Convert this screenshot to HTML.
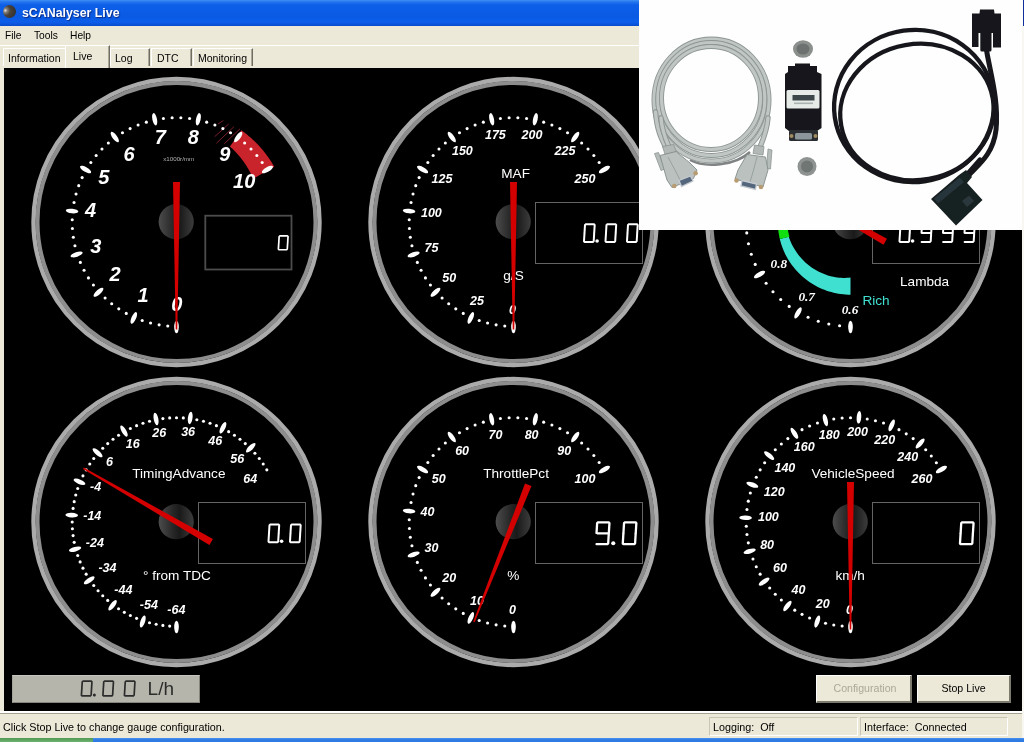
<!DOCTYPE html>
<html><head><meta charset="utf-8"><title>sCANalyser Live</title>
<style>
html,body{margin:0;padding:0;}
body{width:1024px;height:742px;overflow:hidden;background:#ece9d8;font-family:"Liberation Sans",sans-serif;position:relative;}
.abs{position:absolute;}
#title{left:0;top:0;width:1024px;height:26px;background:linear-gradient(#3f90f4 0,#2474ee 2px,#0d5ee8 5px,#0a5ae4 17px,#0c5eea 22px,#0a4ccc 26px);}
#title span{position:absolute;left:21.5px;top:5px;color:#fff;font-weight:bold;font-size:13.5px;text-shadow:1px 1px 1px #0a2a80;white-space:nowrap;transform:scaleX(0.915);transform-origin:0 0;}
#icon{left:3.4px;top:5px;width:13px;height:13px;border-radius:50%;background:radial-gradient(circle at 18% 42%,#e8e8e8 0,#8a8580 14%,#4a433c 38%,#3a3631 70%,#1c2030 100%);}
#menu{left:0;top:26px;width:1024px;height:19px;background:#ece9d8;font-size:11px;}
#menu span{position:absolute;top:3px;color:#000;transform:scaleX(0.93);transform-origin:0 0;}
.tab{position:absolute;top:48px;height:18px;background:#ece9d8;border-top:1px solid #fff;border-left:1px solid #fff;border-right:1px solid #6f6d62;box-shadow:inset -1px 0 0 #aca899;font-size:10.5px;line-height:19px;color:#000;box-sizing:border-box;padding-left:4px;white-space:nowrap;}
#panel{left:4px;top:68px;width:1018px;height:643px;background:#000;}
#status{left:0;top:712px;width:1024px;height:26px;background:#ece9d8;font-size:10.75px;color:#000;}
.sp{position:absolute;top:5px;height:19px;border:1px solid #c9c6b6;border-bottom-color:#fff;border-right-color:#fff;box-sizing:border-box;line-height:18px;padding-left:3px;white-space:pre;}
.btn{position:absolute;top:675px;height:27.5px;background:#ece9d8;border:1px solid #fff;border-right:2px solid #7d7b6e;border-bottom:2px solid #7d7b6e;box-sizing:border-box;font-size:10.6px;text-align:center;line-height:24px;}
#lcd{left:12px;top:675px;width:188px;height:28px;background:#b5b5ab;border:1px solid #85857c;border-top-color:#c6c6be;border-left-color:#a5a59c;box-sizing:border-box;}
</style></head><body><div style="position:absolute;left:0;top:0;width:1024px;height:742px;will-change:transform;overflow:hidden">
<div id="title" class="abs"><div id="icon" class="abs"></div><span>sCANalyser Live</span></div>
<div id="menu" class="abs"><span style="left:5px">File</span><span style="left:34px">Tools</span><span style="left:70px">Help</span></div>
<div class="abs" style="left:0;top:45px;width:1024px;height:1px;background:#fff"></div>
<div class="tab" style="left:3px;width:63px;border-right:none;box-shadow:none">Information</div>
<div class="tab" style="left:110px;width:40px;">Log</div>
<div class="tab" style="left:151px;width:41px;padding-left:5px">DTC</div>
<div class="tab" style="left:193px;width:60px;">Monitoring</div>
<div class="tab" style="left:65px;width:45px;top:45px;height:23px;line-height:21px;padding-left:7px;">Live</div>
<div id="panel" class="abs"></div>
<svg class="abs" style="left:0;top:0;will-change:transform" width="1024" height="742" viewBox="0 0 1024 742">
<defs><linearGradient id="hub" x1="0" y1="0" x2="1" y2="0"><stop offset="0" stop-color="#4c4c4c"/><stop offset="0.42" stop-color="#262626"/><stop offset="0.6" stop-color="#1a1a1a"/><stop offset="1" stop-color="#3c3c3c"/></linearGradient></defs>
<circle cx="176.5" cy="222" r="143" fill="#000" stroke="#ababab" stroke-width="4.4"/>
<circle cx="176.5" cy="222" r="139" fill="none" stroke="#8d8d8d" stroke-width="4"/>
<polygon points="241.39,130.35 242.40,131.07 243.40,131.80 244.39,132.55 245.38,133.30 246.35,134.07 247.32,134.84 248.28,135.63 249.22,136.43 250.16,137.24 251.10,138.05 252.02,138.88 252.93,139.72 253.83,140.57 254.73,141.43 255.61,142.30 256.49,143.18 257.35,144.06 258.21,144.96 259.05,145.87 259.89,146.78 260.71,147.71 261.53,148.64 262.33,149.59 263.13,150.54 263.91,151.50 264.69,152.47 265.45,153.45 266.20,154.43 266.94,155.43 267.67,156.43 268.39,157.44 269.09,158.46 269.79,159.48 270.47,160.52 271.15,161.56 271.81,162.61 272.46,163.66 273.10,164.73 273.72,165.79 274.34,166.87 253.17,178.80 252.78,177.90 252.39,177.00 251.98,176.11 251.57,175.22 251.14,174.33 250.70,173.45 250.26,172.57 249.80,171.70 249.33,170.83 248.85,169.96 248.37,169.10 247.87,168.24 247.36,167.39 246.84,166.54 246.31,165.69 245.77,164.86 245.22,164.02 244.66,163.19 244.09,162.37 243.52,161.55 242.93,160.74 242.33,159.93 241.72,159.13 241.10,158.34 240.48,157.55 239.84,156.77 239.19,155.99 238.54,155.22 237.87,154.45 237.20,153.70 236.51,152.95 235.82,152.20 235.12,151.46 234.41,150.73 233.69,150.01 232.96,149.30 232.22,148.59 231.47,147.89 230.72,147.19 229.95,146.51" fill="#c9242b"/><line x1="224.3" y1="143.7" x2="240" y2="128.8" stroke="#7c1f2c" stroke-width="1"/><line x1="216.4" y1="143.3" x2="233.9" y2="126.7" stroke="#7c1f2c" stroke-width="1"/><line x1="214.6" y1="136.7" x2="228.7" y2="124" stroke="#7c1f2c" stroke-width="1"/><line x1="218" y1="124" x2="223.4" y2="120.5" stroke="#7c1f2c" stroke-width="1"/><text x="178.7" y="161" font-family="Liberation Sans" font-size="6.2" text-anchor="middle" fill="#b0b0b0">x1000r/mm</text>
<circle cx="167.77" cy="325.93" r="1.55" fill="#fff"/>
<circle cx="159.11" cy="324.84" r="1.55" fill="#fff"/>
<circle cx="150.56" cy="323.02" r="1.55" fill="#fff"/>
<circle cx="142.20" cy="320.50" r="1.55" fill="#fff"/>
<circle cx="126.25" cy="313.40" r="1.55" fill="#fff"/>
<circle cx="118.78" cy="308.87" r="1.55" fill="#fff"/>
<circle cx="111.71" cy="303.74" r="1.55" fill="#fff"/>
<circle cx="105.10" cy="298.03" r="1.55" fill="#fff"/>
<circle cx="93.42" cy="285.06" r="1.55" fill="#fff"/>
<circle cx="88.44" cy="277.89" r="1.55" fill="#fff"/>
<circle cx="84.07" cy="270.32" r="1.55" fill="#fff"/>
<circle cx="80.35" cy="262.42" r="1.55" fill="#fff"/>
<circle cx="74.96" cy="245.82" r="1.55" fill="#fff"/>
<circle cx="73.32" cy="237.24" r="1.55" fill="#fff"/>
<circle cx="72.41" cy="228.55" r="1.55" fill="#fff"/>
<circle cx="72.22" cy="219.82" r="1.55" fill="#fff"/>
<circle cx="74.05" cy="202.46" r="1.55" fill="#fff"/>
<circle cx="76.04" cy="193.95" r="1.55" fill="#fff"/>
<circle cx="78.74" cy="185.64" r="1.55" fill="#fff"/>
<circle cx="82.13" cy="177.59" r="1.55" fill="#fff"/>
<circle cx="90.85" cy="162.47" r="1.55" fill="#fff"/>
<circle cx="96.14" cy="155.52" r="1.55" fill="#fff"/>
<circle cx="101.98" cy="149.03" r="1.55" fill="#fff"/>
<circle cx="108.35" cy="143.05" r="1.55" fill="#fff"/>
<circle cx="122.47" cy="132.79" r="1.55" fill="#fff"/>
<circle cx="130.12" cy="128.58" r="1.55" fill="#fff"/>
<circle cx="138.10" cy="125.02" r="1.55" fill="#fff"/>
<circle cx="146.35" cy="122.15" r="1.55" fill="#fff"/>
<circle cx="163.43" cy="118.52" r="1.55" fill="#fff"/>
<circle cx="172.13" cy="117.79" r="1.55" fill="#fff"/>
<circle cx="180.87" cy="117.79" r="1.55" fill="#fff"/>
<circle cx="189.57" cy="118.52" r="1.55" fill="#fff"/>
<circle cx="206.65" cy="122.15" r="1.55" fill="#fff"/>
<circle cx="214.90" cy="125.02" r="1.55" fill="#fff"/>
<circle cx="222.88" cy="128.58" r="1.55" fill="#fff"/>
<circle cx="230.53" cy="132.79" r="1.55" fill="#fff"/>
<circle cx="244.65" cy="143.05" r="1.55" fill="#fff"/>
<circle cx="251.02" cy="149.03" r="1.55" fill="#fff"/>
<circle cx="256.86" cy="155.52" r="1.55" fill="#fff"/>
<circle cx="262.15" cy="162.47" r="1.55" fill="#fff"/>
<ellipse cx="176.50" cy="327.00" rx="6.3" ry="2.3" fill="#fff" transform="rotate(90.00 176.50 327.00)"/>
<ellipse cx="133.79" cy="317.92" rx="6.3" ry="2.3" fill="#fff" transform="rotate(114.00 133.79 317.92)"/>
<ellipse cx="98.47" cy="292.26" rx="6.3" ry="2.3" fill="#fff" transform="rotate(138.00 98.47 292.26)"/>
<ellipse cx="76.64" cy="254.45" rx="6.3" ry="2.3" fill="#fff" transform="rotate(162.00 76.64 254.45)"/>
<ellipse cx="72.08" cy="211.02" rx="6.3" ry="2.3" fill="#fff" transform="rotate(186.00 72.08 211.02)"/>
<ellipse cx="85.57" cy="169.50" rx="6.3" ry="2.3" fill="#fff" transform="rotate(210.00 85.57 169.50)"/>
<ellipse cx="114.78" cy="137.05" rx="6.3" ry="2.3" fill="#fff" transform="rotate(234.00 114.78 137.05)"/>
<ellipse cx="154.67" cy="119.29" rx="6.3" ry="2.3" fill="#fff" transform="rotate(258.00 154.67 119.29)"/>
<ellipse cx="198.33" cy="119.29" rx="6.3" ry="2.3" fill="#fff" transform="rotate(282.00 198.33 119.29)"/>
<ellipse cx="238.22" cy="137.05" rx="6.3" ry="2.3" fill="#fff" transform="rotate(306.00 238.22 137.05)"/>
<ellipse cx="267.43" cy="169.50" rx="6.3" ry="2.3" fill="#fff" transform="rotate(330.00 267.43 169.50)"/>
<text x="176.70" y="303.50" font-family="Liberation Sans" font-weight="bold" font-style="italic" font-size="20" text-anchor="middle" dominant-baseline="central" fill="#fff">0</text>
<text x="143.00" y="295.30" font-family="Liberation Sans" font-weight="bold" font-style="italic" font-size="20" text-anchor="middle" dominant-baseline="central" fill="#fff">1</text>
<text x="115.00" y="274.20" font-family="Liberation Sans" font-weight="bold" font-style="italic" font-size="20" text-anchor="middle" dominant-baseline="central" fill="#fff">2</text>
<text x="95.90" y="245.50" font-family="Liberation Sans" font-weight="bold" font-style="italic" font-size="20" text-anchor="middle" dominant-baseline="central" fill="#fff">3</text>
<text x="90.50" y="210.20" font-family="Liberation Sans" font-weight="bold" font-style="italic" font-size="20" text-anchor="middle" dominant-baseline="central" fill="#fff">4</text>
<text x="103.80" y="176.50" font-family="Liberation Sans" font-weight="bold" font-style="italic" font-size="20" text-anchor="middle" dominant-baseline="central" fill="#fff">5</text>
<text x="129.10" y="153.60" font-family="Liberation Sans" font-weight="bold" font-style="italic" font-size="20" text-anchor="middle" dominant-baseline="central" fill="#fff">6</text>
<text x="160.20" y="137.40" font-family="Liberation Sans" font-weight="bold" font-style="italic" font-size="20" text-anchor="middle" dominant-baseline="central" fill="#fff">7</text>
<text x="193.30" y="137.40" font-family="Liberation Sans" font-weight="bold" font-style="italic" font-size="20" text-anchor="middle" dominant-baseline="central" fill="#fff">8</text>
<text x="224.70" y="153.60" font-family="Liberation Sans" font-weight="bold" font-style="italic" font-size="20" text-anchor="middle" dominant-baseline="central" fill="#fff">9</text>
<text x="244.20" y="180.50" font-family="Liberation Sans" font-weight="bold" font-style="italic" font-size="20" text-anchor="middle" dominant-baseline="central" fill="#fff">10</text>
<circle cx="176.2" cy="221.7" r="17.6" fill="url(#hub)"/>
<rect x="205.3" y="215.7" width="86.2" height="53.8" fill="#000" stroke="#4c4c4c" stroke-width="1.8"/>
<g stroke="#fff" stroke-width="1.70" stroke-linecap="round" fill="none"><line x1="279.90" y1="235.85" x2="287.40" y2="235.85"/><line x1="288.05" y1="236.55" x2="287.69" y2="242.45"/><line x1="287.64" y1="243.15" x2="287.28" y2="249.05"/><line x1="279.04" y1="249.75" x2="286.54" y2="249.75"/><line x1="278.74" y1="243.15" x2="278.38" y2="249.05"/><line x1="279.15" y1="236.55" x2="278.79" y2="242.45"/></g>
<polygon points="173.00,182.00 175.70,329.50 177.30,329.50 180.00,182.00" fill="#d40000"/>
<circle cx="513.5" cy="222" r="143" fill="#000" stroke="#ababab" stroke-width="4.4"/>
<circle cx="513.5" cy="222" r="139" fill="none" stroke="#8d8d8d" stroke-width="4"/>

<circle cx="504.77" cy="325.93" r="1.55" fill="#fff"/>
<circle cx="496.11" cy="324.84" r="1.55" fill="#fff"/>
<circle cx="487.56" cy="323.02" r="1.55" fill="#fff"/>
<circle cx="479.20" cy="320.50" r="1.55" fill="#fff"/>
<circle cx="463.25" cy="313.40" r="1.55" fill="#fff"/>
<circle cx="455.78" cy="308.87" r="1.55" fill="#fff"/>
<circle cx="448.71" cy="303.74" r="1.55" fill="#fff"/>
<circle cx="442.10" cy="298.03" r="1.55" fill="#fff"/>
<circle cx="430.42" cy="285.06" r="1.55" fill="#fff"/>
<circle cx="425.44" cy="277.89" r="1.55" fill="#fff"/>
<circle cx="421.07" cy="270.32" r="1.55" fill="#fff"/>
<circle cx="417.35" cy="262.42" r="1.55" fill="#fff"/>
<circle cx="411.96" cy="245.82" r="1.55" fill="#fff"/>
<circle cx="410.32" cy="237.24" r="1.55" fill="#fff"/>
<circle cx="409.41" cy="228.55" r="1.55" fill="#fff"/>
<circle cx="409.22" cy="219.82" r="1.55" fill="#fff"/>
<circle cx="411.05" cy="202.46" r="1.55" fill="#fff"/>
<circle cx="413.04" cy="193.95" r="1.55" fill="#fff"/>
<circle cx="415.74" cy="185.64" r="1.55" fill="#fff"/>
<circle cx="419.13" cy="177.59" r="1.55" fill="#fff"/>
<circle cx="427.85" cy="162.47" r="1.55" fill="#fff"/>
<circle cx="433.14" cy="155.52" r="1.55" fill="#fff"/>
<circle cx="438.98" cy="149.03" r="1.55" fill="#fff"/>
<circle cx="445.35" cy="143.05" r="1.55" fill="#fff"/>
<circle cx="459.47" cy="132.79" r="1.55" fill="#fff"/>
<circle cx="467.12" cy="128.58" r="1.55" fill="#fff"/>
<circle cx="475.10" cy="125.02" r="1.55" fill="#fff"/>
<circle cx="483.35" cy="122.15" r="1.55" fill="#fff"/>
<circle cx="500.43" cy="118.52" r="1.55" fill="#fff"/>
<circle cx="509.13" cy="117.79" r="1.55" fill="#fff"/>
<circle cx="517.87" cy="117.79" r="1.55" fill="#fff"/>
<circle cx="526.57" cy="118.52" r="1.55" fill="#fff"/>
<circle cx="543.65" cy="122.15" r="1.55" fill="#fff"/>
<circle cx="551.90" cy="125.02" r="1.55" fill="#fff"/>
<circle cx="559.88" cy="128.58" r="1.55" fill="#fff"/>
<circle cx="567.53" cy="132.79" r="1.55" fill="#fff"/>
<circle cx="581.65" cy="143.05" r="1.55" fill="#fff"/>
<circle cx="588.02" cy="149.03" r="1.55" fill="#fff"/>
<circle cx="593.86" cy="155.52" r="1.55" fill="#fff"/>
<circle cx="599.15" cy="162.47" r="1.55" fill="#fff"/>
<ellipse cx="513.50" cy="327.00" rx="6.3" ry="2.3" fill="#fff" transform="rotate(90.00 513.50 327.00)"/>
<ellipse cx="470.79" cy="317.92" rx="6.3" ry="2.3" fill="#fff" transform="rotate(114.00 470.79 317.92)"/>
<ellipse cx="435.47" cy="292.26" rx="6.3" ry="2.3" fill="#fff" transform="rotate(138.00 435.47 292.26)"/>
<ellipse cx="413.64" cy="254.45" rx="6.3" ry="2.3" fill="#fff" transform="rotate(162.00 413.64 254.45)"/>
<ellipse cx="409.08" cy="211.02" rx="6.3" ry="2.3" fill="#fff" transform="rotate(186.00 409.08 211.02)"/>
<ellipse cx="422.57" cy="169.50" rx="6.3" ry="2.3" fill="#fff" transform="rotate(210.00 422.57 169.50)"/>
<ellipse cx="451.78" cy="137.05" rx="6.3" ry="2.3" fill="#fff" transform="rotate(234.00 451.78 137.05)"/>
<ellipse cx="491.67" cy="119.29" rx="6.3" ry="2.3" fill="#fff" transform="rotate(258.00 491.67 119.29)"/>
<ellipse cx="535.33" cy="119.29" rx="6.3" ry="2.3" fill="#fff" transform="rotate(282.00 535.33 119.29)"/>
<ellipse cx="575.22" cy="137.05" rx="6.3" ry="2.3" fill="#fff" transform="rotate(306.00 575.22 137.05)"/>
<ellipse cx="604.43" cy="169.50" rx="6.3" ry="2.3" fill="#fff" transform="rotate(330.00 604.43 169.50)"/>
<text x="512.50" y="309.60" font-family="Liberation Sans" font-weight="bold" font-style="italic" font-size="12.5" text-anchor="middle" dominant-baseline="central" fill="#fff">0</text>
<text x="477.00" y="301.20" font-family="Liberation Sans" font-weight="bold" font-style="italic" font-size="12.5" text-anchor="middle" dominant-baseline="central" fill="#fff">25</text>
<text x="449.20" y="278.20" font-family="Liberation Sans" font-weight="bold" font-style="italic" font-size="12.5" text-anchor="middle" dominant-baseline="central" fill="#fff">50</text>
<text x="431.40" y="247.80" font-family="Liberation Sans" font-weight="bold" font-style="italic" font-size="12.5" text-anchor="middle" dominant-baseline="central" fill="#fff">75</text>
<text x="431.40" y="212.50" font-family="Liberation Sans" font-weight="bold" font-style="italic" font-size="12.5" text-anchor="middle" dominant-baseline="central" fill="#fff">100</text>
<text x="442.00" y="179.20" font-family="Liberation Sans" font-weight="bold" font-style="italic" font-size="12.5" text-anchor="middle" dominant-baseline="central" fill="#fff">125</text>
<text x="462.40" y="150.50" font-family="Liberation Sans" font-weight="bold" font-style="italic" font-size="12.5" text-anchor="middle" dominant-baseline="central" fill="#fff">150</text>
<text x="495.40" y="134.60" font-family="Liberation Sans" font-weight="bold" font-style="italic" font-size="12.5" text-anchor="middle" dominant-baseline="central" fill="#fff">175</text>
<text x="532.00" y="134.60" font-family="Liberation Sans" font-weight="bold" font-style="italic" font-size="12.5" text-anchor="middle" dominant-baseline="central" fill="#fff">200</text>
<text x="565.00" y="150.50" font-family="Liberation Sans" font-weight="bold" font-style="italic" font-size="12.5" text-anchor="middle" dominant-baseline="central" fill="#fff">225</text>
<text x="585.00" y="179.20" font-family="Liberation Sans" font-weight="bold" font-style="italic" font-size="12.5" text-anchor="middle" dominant-baseline="central" fill="#fff">250</text>
<text x="515.6" y="177.6" font-family="Liberation Sans" font-size="13.6" text-anchor="middle" fill="#fff">MAF</text>
<text x="513.5" y="279.5" font-family="Liberation Sans" font-size="13.6" text-anchor="middle" fill="#fff">g/S</text>
<circle cx="513.2" cy="221.7" r="17.6" fill="url(#hub)"/>
<rect x="535.5" y="202.5" width="107" height="61" fill="#000" stroke="#646464" stroke-width="1"/>
<g stroke="#fff" stroke-width="2.00" stroke-linecap="round" fill="none"><line x1="628.74" y1="224.30" x2="637.04" y2="224.30"/><line x1="637.69" y1="225.00" x2="637.21" y2="232.75"/><line x1="637.17" y1="233.45" x2="636.69" y2="241.20"/><line x1="627.65" y1="241.90" x2="635.95" y2="241.90"/><line x1="627.47" y1="233.45" x2="626.99" y2="241.20"/><line x1="627.99" y1="225.00" x2="627.51" y2="232.75"/></g><g stroke="#fff" stroke-width="2.00" stroke-linecap="round" fill="none"><line x1="607.24" y1="224.30" x2="615.54" y2="224.30"/><line x1="616.19" y1="225.00" x2="615.71" y2="232.75"/><line x1="615.67" y1="233.45" x2="615.19" y2="241.20"/><line x1="606.15" y1="241.90" x2="614.45" y2="241.90"/><line x1="605.97" y1="233.45" x2="605.49" y2="241.20"/><line x1="606.49" y1="225.00" x2="606.01" y2="232.75"/></g><circle cx="597.10" cy="241.00" r="1.80" fill="#fff"/><g stroke="#fff" stroke-width="2.00" stroke-linecap="round" fill="none"><line x1="585.74" y1="224.30" x2="594.04" y2="224.30"/><line x1="594.69" y1="225.00" x2="594.21" y2="232.75"/><line x1="594.17" y1="233.45" x2="593.69" y2="241.20"/><line x1="584.65" y1="241.90" x2="592.95" y2="241.90"/><line x1="584.47" y1="233.45" x2="583.99" y2="241.20"/><line x1="584.99" y1="225.00" x2="584.51" y2="232.75"/></g>
<polygon points="510.00,182.00 512.70,329.50 514.30,329.50 517.00,182.00" fill="#d40000"/>
<circle cx="850.5" cy="222" r="143" fill="#000" stroke="#ababab" stroke-width="4.4"/>
<circle cx="850.5" cy="222" r="139" fill="none" stroke="#8d8d8d" stroke-width="4"/>
<polygon points="850.50,294.70 848.07,294.66 845.65,294.54 843.23,294.34 840.82,294.05 838.42,293.69 836.04,293.25 833.67,292.72 831.32,292.12 828.99,291.44 826.68,290.69 824.40,289.85 822.15,288.95 819.93,287.96 817.75,286.91 815.60,285.78 813.49,284.58 811.42,283.31 809.40,281.97 807.42,280.56 805.49,279.09 803.61,277.56 801.78,275.96 800.01,274.31 798.29,272.59 796.63,270.82 795.03,269.00 793.50,267.12 792.02,265.19 790.61,263.22 789.27,261.20 788.00,259.13 786.79,257.02 785.66,254.88 784.60,252.70 783.61,250.48 782.70,248.23 781.86,245.95 781.10,243.65 780.41,241.32 779.81,238.97 788.75,236.82 789.47,238.82 790.26,240.79 791.11,242.73 792.01,244.63 792.98,246.49 794.01,248.31 795.10,250.09 796.24,251.83 797.43,253.52 798.68,255.17 799.98,256.77 801.33,258.32 802.72,259.82 804.16,261.26 805.64,262.65 807.17,263.99 808.73,265.27 810.33,266.50 811.97,267.66 813.63,268.77 815.33,269.81 817.06,270.80 818.81,271.72 820.59,272.58 822.39,273.37 824.21,274.11 826.04,274.78 827.90,275.38 829.76,275.92 831.64,276.40 833.52,276.81 835.41,277.15 837.31,277.43 839.20,277.65 841.10,277.80 842.99,277.89 844.88,277.91 846.76,277.87 848.64,277.77 850.50,277.60" fill="#40e0d0"/><polygon points="779.81,238.97 779.57,237.94 779.34,236.90 779.13,235.86 778.94,234.81 778.76,233.76 778.59,232.71 778.44,231.66 778.31,230.61 778.19,229.55 778.09,228.49 778.00,227.44 777.93,226.37 777.88,225.31 777.83,224.25 777.81,223.19 777.80,222.13 777.81,221.06 777.83,220.00 777.86,218.94 777.92,217.88 777.98,216.82 778.07,215.76 778.17,214.70 778.28,213.64 778.41,212.59 778.56,211.54 778.72,210.49 778.89,209.44 779.08,208.39 779.29,207.35 779.51,206.31 779.75,205.28 780.00,204.24 780.27,203.21 780.55,202.19 780.85,201.17 781.16,200.15 781.49,199.14 781.83,198.14 782.18,197.14 789.89,199.94 789.61,200.84 789.35,201.75 789.10,202.66 788.87,203.57 788.65,204.48 788.44,205.40 788.24,206.32 788.06,207.24 787.89,208.16 787.74,209.09 787.60,210.02 787.47,210.94 787.36,211.87 787.26,212.80 787.17,213.73 787.10,214.66 787.04,215.60 787.00,216.53 786.97,217.46 786.95,218.39 786.95,219.32 786.96,220.25 786.98,221.18 787.02,222.11 787.07,223.04 787.14,223.96 787.21,224.89 787.30,225.81 787.41,226.73 787.53,227.65 787.66,228.56 787.80,229.48 787.96,230.39 788.13,231.29 788.32,232.20 788.52,233.10 788.73,233.99 788.95,234.89 789.19,235.78 789.44,236.66" fill="#10e010"/>
<circle cx="839.60" cy="325.73" r="1.55" fill="#fff"/>
<circle cx="828.81" cy="324.02" r="1.55" fill="#fff"/>
<circle cx="818.27" cy="321.20" r="1.55" fill="#fff"/>
<circle cx="808.08" cy="317.28" r="1.55" fill="#fff"/>
<circle cx="789.19" cy="306.38" r="1.55" fill="#fff"/>
<circle cx="780.71" cy="299.51" r="1.55" fill="#fff"/>
<circle cx="772.99" cy="291.79" r="1.55" fill="#fff"/>
<circle cx="766.12" cy="283.31" r="1.55" fill="#fff"/>
<circle cx="755.22" cy="264.42" r="1.55" fill="#fff"/>
<circle cx="751.30" cy="254.23" r="1.55" fill="#fff"/>
<circle cx="748.48" cy="243.69" r="1.55" fill="#fff"/>
<circle cx="746.77" cy="232.90" r="1.55" fill="#fff"/>
<circle cx="746.77" cy="211.10" r="1.55" fill="#fff"/>
<circle cx="748.48" cy="200.31" r="1.55" fill="#fff"/>
<circle cx="751.30" cy="189.77" r="1.55" fill="#fff"/>
<circle cx="755.22" cy="179.58" r="1.55" fill="#fff"/>
<circle cx="766.12" cy="160.69" r="1.55" fill="#fff"/>
<circle cx="772.99" cy="152.21" r="1.55" fill="#fff"/>
<circle cx="780.71" cy="144.49" r="1.55" fill="#fff"/>
<circle cx="789.19" cy="137.62" r="1.55" fill="#fff"/>
<circle cx="808.08" cy="126.72" r="1.55" fill="#fff"/>
<circle cx="818.27" cy="122.80" r="1.55" fill="#fff"/>
<circle cx="828.81" cy="119.98" r="1.55" fill="#fff"/>
<circle cx="839.60" cy="118.27" r="1.55" fill="#fff"/>
<circle cx="861.40" cy="118.27" r="1.55" fill="#fff"/>
<circle cx="872.19" cy="119.98" r="1.55" fill="#fff"/>
<circle cx="882.73" cy="122.80" r="1.55" fill="#fff"/>
<circle cx="892.92" cy="126.72" r="1.55" fill="#fff"/>
<circle cx="911.81" cy="137.62" r="1.55" fill="#fff"/>
<circle cx="920.29" cy="144.49" r="1.55" fill="#fff"/>
<circle cx="928.01" cy="152.21" r="1.55" fill="#fff"/>
<circle cx="934.88" cy="160.69" r="1.55" fill="#fff"/>
<ellipse cx="850.50" cy="327.00" rx="6.3" ry="2.3" fill="#fff" transform="rotate(90.00 850.50 327.00)"/>
<ellipse cx="798.00" cy="312.93" rx="6.3" ry="2.3" fill="#fff" transform="rotate(120.00 798.00 312.93)"/>
<ellipse cx="759.57" cy="274.50" rx="6.3" ry="2.3" fill="#fff" transform="rotate(150.00 759.57 274.50)"/>
<ellipse cx="745.50" cy="222.00" rx="6.3" ry="2.3" fill="#fff" transform="rotate(180.00 745.50 222.00)"/>
<ellipse cx="759.57" cy="169.50" rx="6.3" ry="2.3" fill="#fff" transform="rotate(210.00 759.57 169.50)"/>
<ellipse cx="798.00" cy="131.07" rx="6.3" ry="2.3" fill="#fff" transform="rotate(240.00 798.00 131.07)"/>
<ellipse cx="850.50" cy="117.00" rx="6.3" ry="2.3" fill="#fff" transform="rotate(270.00 850.50 117.00)"/>
<ellipse cx="903.00" cy="131.07" rx="6.3" ry="2.3" fill="#fff" transform="rotate(300.00 903.00 131.07)"/>
<ellipse cx="941.43" cy="169.50" rx="6.3" ry="2.3" fill="#fff" transform="rotate(330.00 941.43 169.50)"/>
<text x="850.00" y="309.60" font-family="Liberation Serif" font-weight="bold" font-style="italic" font-size="13.3" text-anchor="middle" dominant-baseline="central" fill="#fff">0.6</text>
<text x="806.70" y="296.70" font-family="Liberation Serif" font-weight="bold" font-style="italic" font-size="13.3" text-anchor="middle" dominant-baseline="central" fill="#fff">0.7</text>
<text x="778.80" y="263.00" font-family="Liberation Serif" font-weight="bold" font-style="italic" font-size="13.3" text-anchor="middle" dominant-baseline="central" fill="#fff">0.8</text>
<text x="767.50" y="222.00" font-family="Liberation Serif" font-weight="bold" font-style="italic" font-size="13.3" text-anchor="middle" dominant-baseline="central" fill="#fff">0.9</text>
<text x="778.62" y="180.50" font-family="Liberation Serif" font-weight="bold" font-style="italic" font-size="13.3" text-anchor="middle" dominant-baseline="central" fill="#fff">1.0</text>
<text x="809.00" y="150.12" font-family="Liberation Serif" font-weight="bold" font-style="italic" font-size="13.3" text-anchor="middle" dominant-baseline="central" fill="#fff">1.1</text>
<text x="850.50" y="139.00" font-family="Liberation Serif" font-weight="bold" font-style="italic" font-size="13.3" text-anchor="middle" dominant-baseline="central" fill="#fff">1.2</text>
<text x="892.00" y="150.12" font-family="Liberation Serif" font-weight="bold" font-style="italic" font-size="13.3" text-anchor="middle" dominant-baseline="central" fill="#fff">1.3</text>
<text x="922.38" y="180.50" font-family="Liberation Serif" font-weight="bold" font-style="italic" font-size="13.3" text-anchor="middle" dominant-baseline="central" fill="#fff">1.4</text>
<text x="924.6" y="285.9" font-family="Liberation Sans" font-size="13.6" text-anchor="middle" fill="#fff">Lambda</text>
<text x="876" y="305.1" font-family="Liberation Sans" font-size="13.6" text-anchor="middle" fill="#40e0d0">Rich</text>
<circle cx="850.2" cy="221.7" r="17.6" fill="url(#hub)"/>
<rect x="872.5" y="202.5" width="107" height="61" fill="#000" stroke="#646464" stroke-width="1"/>
<g stroke="#fff" stroke-width="2.00" stroke-linecap="round" fill="none"><line x1="965.74" y1="224.30" x2="974.04" y2="224.30"/><line x1="974.69" y1="225.00" x2="974.21" y2="232.75"/><line x1="974.17" y1="233.45" x2="973.69" y2="241.20"/><line x1="964.65" y1="241.90" x2="972.95" y2="241.90"/><line x1="964.99" y1="225.00" x2="964.51" y2="232.75"/><line x1="965.19" y1="233.10" x2="973.49" y2="233.10"/></g><g stroke="#fff" stroke-width="2.00" stroke-linecap="round" fill="none"><line x1="944.24" y1="224.30" x2="952.54" y2="224.30"/><line x1="953.19" y1="225.00" x2="952.71" y2="232.75"/><line x1="952.67" y1="233.45" x2="952.19" y2="241.20"/><line x1="943.15" y1="241.90" x2="951.45" y2="241.90"/><line x1="943.49" y1="225.00" x2="943.01" y2="232.75"/><line x1="943.69" y1="233.10" x2="951.99" y2="233.10"/></g><g stroke="#fff" stroke-width="2.00" stroke-linecap="round" fill="none"><line x1="922.74" y1="224.30" x2="931.04" y2="224.30"/><line x1="931.69" y1="225.00" x2="931.21" y2="232.75"/><line x1="931.17" y1="233.45" x2="930.69" y2="241.20"/><line x1="921.65" y1="241.90" x2="929.95" y2="241.90"/><line x1="921.99" y1="225.00" x2="921.51" y2="232.75"/><line x1="922.19" y1="233.10" x2="930.49" y2="233.10"/></g><circle cx="912.60" cy="241.00" r="1.80" fill="#fff"/><g stroke="#fff" stroke-width="2.00" stroke-linecap="round" fill="none"><line x1="901.24" y1="224.30" x2="909.54" y2="224.30"/><line x1="910.19" y1="225.00" x2="909.71" y2="232.75"/><line x1="909.67" y1="233.45" x2="909.19" y2="241.20"/><line x1="900.15" y1="241.90" x2="908.45" y2="241.90"/><line x1="899.97" y1="233.45" x2="899.49" y2="241.20"/><line x1="900.49" y1="225.00" x2="900.01" y2="232.75"/></g>
<polygon points="886.98,238.78 757.52,168.04 756.73,169.43 883.51,244.86" fill="#d40000"/>
<circle cx="176.5" cy="522" r="143" fill="#000" stroke="#ababab" stroke-width="4.4"/>
<circle cx="176.5" cy="522" r="139" fill="none" stroke="#8d8d8d" stroke-width="4"/>

<circle cx="169.68" cy="626.08" r="1.55" fill="#fff"/>
<circle cx="162.89" cy="625.41" r="1.55" fill="#fff"/>
<circle cx="156.15" cy="624.30" r="1.55" fill="#fff"/>
<circle cx="149.51" cy="622.75" r="1.55" fill="#fff"/>
<circle cx="136.59" cy="618.36" r="1.55" fill="#fff"/>
<circle cx="130.37" cy="615.54" r="1.55" fill="#fff"/>
<circle cx="124.35" cy="612.33" r="1.55" fill="#fff"/>
<circle cx="118.55" cy="608.72" r="1.55" fill="#fff"/>
<circle cx="107.73" cy="600.42" r="1.55" fill="#fff"/>
<circle cx="102.75" cy="595.75" r="1.55" fill="#fff"/>
<circle cx="98.08" cy="590.77" r="1.55" fill="#fff"/>
<circle cx="93.75" cy="585.49" r="1.55" fill="#fff"/>
<circle cx="86.17" cy="574.15" r="1.55" fill="#fff"/>
<circle cx="82.96" cy="568.13" r="1.55" fill="#fff"/>
<circle cx="80.14" cy="561.91" r="1.55" fill="#fff"/>
<circle cx="77.74" cy="555.53" r="1.55" fill="#fff"/>
<circle cx="74.20" cy="542.35" r="1.55" fill="#fff"/>
<circle cx="73.09" cy="535.61" r="1.55" fill="#fff"/>
<circle cx="72.42" cy="528.82" r="1.55" fill="#fff"/>
<circle cx="72.20" cy="522.00" r="1.55" fill="#fff"/>
<circle cx="73.09" cy="508.39" r="1.55" fill="#fff"/>
<circle cx="74.20" cy="501.65" r="1.55" fill="#fff"/>
<circle cx="75.75" cy="495.01" r="1.55" fill="#fff"/>
<circle cx="77.74" cy="488.47" r="1.55" fill="#fff"/>
<circle cx="82.96" cy="475.87" r="1.55" fill="#fff"/>
<circle cx="86.17" cy="469.85" r="1.55" fill="#fff"/>
<circle cx="89.78" cy="464.05" r="1.55" fill="#fff"/>
<circle cx="93.75" cy="458.51" r="1.55" fill="#fff"/>
<circle cx="102.75" cy="448.25" r="1.55" fill="#fff"/>
<circle cx="107.73" cy="443.58" r="1.55" fill="#fff"/>
<circle cx="113.01" cy="439.25" r="1.55" fill="#fff"/>
<circle cx="118.55" cy="435.28" r="1.55" fill="#fff"/>
<circle cx="130.37" cy="428.46" r="1.55" fill="#fff"/>
<circle cx="136.59" cy="425.64" r="1.55" fill="#fff"/>
<circle cx="142.97" cy="423.24" r="1.55" fill="#fff"/>
<circle cx="149.51" cy="421.25" r="1.55" fill="#fff"/>
<circle cx="162.89" cy="418.59" r="1.55" fill="#fff"/>
<circle cx="169.68" cy="417.92" r="1.55" fill="#fff"/>
<circle cx="176.50" cy="417.70" r="1.55" fill="#fff"/>
<circle cx="183.32" cy="417.92" r="1.55" fill="#fff"/>
<circle cx="196.85" cy="419.70" r="1.55" fill="#fff"/>
<circle cx="203.49" cy="421.25" r="1.55" fill="#fff"/>
<circle cx="210.03" cy="423.24" r="1.55" fill="#fff"/>
<circle cx="216.41" cy="425.64" r="1.55" fill="#fff"/>
<circle cx="228.65" cy="431.67" r="1.55" fill="#fff"/>
<circle cx="234.45" cy="435.28" r="1.55" fill="#fff"/>
<circle cx="239.99" cy="439.25" r="1.55" fill="#fff"/>
<circle cx="245.27" cy="443.58" r="1.55" fill="#fff"/>
<circle cx="254.92" cy="453.23" r="1.55" fill="#fff"/>
<circle cx="259.25" cy="458.51" r="1.55" fill="#fff"/>
<circle cx="263.22" cy="464.05" r="1.55" fill="#fff"/>
<circle cx="266.83" cy="469.85" r="1.55" fill="#fff"/>
<ellipse cx="176.50" cy="627.00" rx="6.3" ry="2.3" fill="#fff" transform="rotate(90.00 176.50 627.00)"/>
<ellipse cx="142.75" cy="621.43" rx="6.3" ry="2.3" fill="#fff" transform="rotate(108.75 142.75 621.43)"/>
<ellipse cx="112.58" cy="605.30" rx="6.3" ry="2.3" fill="#fff" transform="rotate(127.50 112.58 605.30)"/>
<ellipse cx="89.20" cy="580.33" rx="6.3" ry="2.3" fill="#fff" transform="rotate(146.25 89.20 580.33)"/>
<ellipse cx="75.08" cy="549.18" rx="6.3" ry="2.3" fill="#fff" transform="rotate(165.00 75.08 549.18)"/>
<ellipse cx="71.72" cy="515.13" rx="6.3" ry="2.3" fill="#fff" transform="rotate(183.75 71.72 515.13)"/>
<ellipse cx="79.49" cy="481.82" rx="6.3" ry="2.3" fill="#fff" transform="rotate(202.50 79.49 481.82)"/>
<ellipse cx="97.56" cy="452.77" rx="6.3" ry="2.3" fill="#fff" transform="rotate(221.25 97.56 452.77)"/>
<ellipse cx="124.00" cy="431.07" rx="6.3" ry="2.3" fill="#fff" transform="rotate(240.00 124.00 431.07)"/>
<ellipse cx="156.02" cy="419.02" rx="6.3" ry="2.3" fill="#fff" transform="rotate(258.75 156.02 419.02)"/>
<ellipse cx="190.21" cy="417.90" rx="6.3" ry="2.3" fill="#fff" transform="rotate(277.50 190.21 417.90)"/>
<ellipse cx="222.94" cy="427.83" rx="6.3" ry="2.3" fill="#fff" transform="rotate(296.25 222.94 427.83)"/>
<ellipse cx="250.75" cy="447.75" rx="6.3" ry="2.3" fill="#fff" transform="rotate(315.00 250.75 447.75)"/>
<text x="176.40" y="610.20" font-family="Liberation Sans" font-weight="bold" font-style="italic" font-size="12.5" text-anchor="middle" dominant-baseline="central" fill="#fff">-64</text>
<text x="148.90" y="604.70" font-family="Liberation Sans" font-weight="bold" font-style="italic" font-size="12.5" text-anchor="middle" dominant-baseline="central" fill="#fff">-54</text>
<text x="123.40" y="590.20" font-family="Liberation Sans" font-weight="bold" font-style="italic" font-size="12.5" text-anchor="middle" dominant-baseline="central" fill="#fff">-44</text>
<text x="107.50" y="567.50" font-family="Liberation Sans" font-weight="bold" font-style="italic" font-size="12.5" text-anchor="middle" dominant-baseline="central" fill="#fff">-34</text>
<text x="94.90" y="542.60" font-family="Liberation Sans" font-weight="bold" font-style="italic" font-size="12.5" text-anchor="middle" dominant-baseline="central" fill="#fff">-24</text>
<text x="92.30" y="515.50" font-family="Liberation Sans" font-weight="bold" font-style="italic" font-size="12.5" text-anchor="middle" dominant-baseline="central" fill="#fff">-14</text>
<text x="95.60" y="487.30" font-family="Liberation Sans" font-weight="bold" font-style="italic" font-size="12.5" text-anchor="middle" dominant-baseline="central" fill="#fff">-4</text>
<text x="109.50" y="462.10" font-family="Liberation Sans" font-weight="bold" font-style="italic" font-size="12.5" text-anchor="middle" dominant-baseline="central" fill="#fff">6</text>
<text x="132.80" y="444.30" font-family="Liberation Sans" font-weight="bold" font-style="italic" font-size="12.5" text-anchor="middle" dominant-baseline="central" fill="#fff">16</text>
<text x="159.30" y="433.30" font-family="Liberation Sans" font-weight="bold" font-style="italic" font-size="12.5" text-anchor="middle" dominant-baseline="central" fill="#fff">26</text>
<text x="188.10" y="432.30" font-family="Liberation Sans" font-weight="bold" font-style="italic" font-size="12.5" text-anchor="middle" dominant-baseline="central" fill="#fff">36</text>
<text x="215.20" y="441.10" font-family="Liberation Sans" font-weight="bold" font-style="italic" font-size="12.5" text-anchor="middle" dominant-baseline="central" fill="#fff">46</text>
<text x="237.20" y="458.90" font-family="Liberation Sans" font-weight="bold" font-style="italic" font-size="12.5" text-anchor="middle" dominant-baseline="central" fill="#fff">56</text>
<text x="250.20" y="478.60" font-family="Liberation Sans" font-weight="bold" font-style="italic" font-size="12.5" text-anchor="middle" dominant-baseline="central" fill="#fff">64</text>
<text x="178.9" y="478.3" font-family="Liberation Sans" font-size="13.6" text-anchor="middle" fill="#fff">TimingAdvance</text>
<text x="176.9" y="580.1" font-family="Liberation Sans" font-size="13.6" text-anchor="middle" fill="#fff">° from TDC</text>
<circle cx="176.2" cy="521.7" r="17.6" fill="url(#hub)"/>
<rect x="198.5" y="502.5" width="107" height="61" fill="#000" stroke="#646464" stroke-width="1"/>
<g stroke="#fff" stroke-width="2.00" stroke-linecap="round" fill="none"><line x1="291.74" y1="524.60" x2="300.04" y2="524.60"/><line x1="300.69" y1="525.30" x2="300.21" y2="533.05"/><line x1="300.17" y1="533.75" x2="299.69" y2="541.50"/><line x1="290.65" y1="542.20" x2="298.95" y2="542.20"/><line x1="290.47" y1="533.75" x2="289.99" y2="541.50"/><line x1="290.99" y1="525.30" x2="290.51" y2="533.05"/></g><circle cx="281.60" cy="541.30" r="1.80" fill="#fff"/><g stroke="#fff" stroke-width="2.00" stroke-linecap="round" fill="none"><line x1="270.24" y1="524.60" x2="278.54" y2="524.60"/><line x1="279.19" y1="525.30" x2="278.71" y2="533.05"/><line x1="278.67" y1="533.75" x2="278.19" y2="541.50"/><line x1="269.15" y1="542.20" x2="277.45" y2="542.20"/><line x1="268.97" y1="533.75" x2="268.49" y2="541.50"/><line x1="269.49" y1="525.30" x2="269.01" y2="533.05"/></g>
<polygon points="212.89,538.97 83.80,467.56 83.00,468.94 209.39,545.03" fill="#d40000"/>
<circle cx="513.5" cy="522" r="143" fill="#000" stroke="#ababab" stroke-width="4.4"/>
<circle cx="513.5" cy="522" r="139" fill="none" stroke="#8d8d8d" stroke-width="4"/>

<circle cx="504.77" cy="625.93" r="1.55" fill="#fff"/>
<circle cx="496.11" cy="624.84" r="1.55" fill="#fff"/>
<circle cx="487.56" cy="623.02" r="1.55" fill="#fff"/>
<circle cx="479.20" cy="620.50" r="1.55" fill="#fff"/>
<circle cx="463.25" cy="613.40" r="1.55" fill="#fff"/>
<circle cx="455.78" cy="608.87" r="1.55" fill="#fff"/>
<circle cx="448.71" cy="603.74" r="1.55" fill="#fff"/>
<circle cx="442.10" cy="598.03" r="1.55" fill="#fff"/>
<circle cx="430.42" cy="585.06" r="1.55" fill="#fff"/>
<circle cx="425.44" cy="577.89" r="1.55" fill="#fff"/>
<circle cx="421.07" cy="570.32" r="1.55" fill="#fff"/>
<circle cx="417.35" cy="562.42" r="1.55" fill="#fff"/>
<circle cx="411.96" cy="545.82" r="1.55" fill="#fff"/>
<circle cx="410.32" cy="537.24" r="1.55" fill="#fff"/>
<circle cx="409.41" cy="528.55" r="1.55" fill="#fff"/>
<circle cx="409.22" cy="519.82" r="1.55" fill="#fff"/>
<circle cx="411.05" cy="502.46" r="1.55" fill="#fff"/>
<circle cx="413.04" cy="493.95" r="1.55" fill="#fff"/>
<circle cx="415.74" cy="485.64" r="1.55" fill="#fff"/>
<circle cx="419.13" cy="477.59" r="1.55" fill="#fff"/>
<circle cx="427.85" cy="462.47" r="1.55" fill="#fff"/>
<circle cx="433.14" cy="455.52" r="1.55" fill="#fff"/>
<circle cx="438.98" cy="449.03" r="1.55" fill="#fff"/>
<circle cx="445.35" cy="443.05" r="1.55" fill="#fff"/>
<circle cx="459.47" cy="432.79" r="1.55" fill="#fff"/>
<circle cx="467.12" cy="428.58" r="1.55" fill="#fff"/>
<circle cx="475.10" cy="425.02" r="1.55" fill="#fff"/>
<circle cx="483.35" cy="422.15" r="1.55" fill="#fff"/>
<circle cx="500.43" cy="418.52" r="1.55" fill="#fff"/>
<circle cx="509.13" cy="417.79" r="1.55" fill="#fff"/>
<circle cx="517.87" cy="417.79" r="1.55" fill="#fff"/>
<circle cx="526.57" cy="418.52" r="1.55" fill="#fff"/>
<circle cx="543.65" cy="422.15" r="1.55" fill="#fff"/>
<circle cx="551.90" cy="425.02" r="1.55" fill="#fff"/>
<circle cx="559.88" cy="428.58" r="1.55" fill="#fff"/>
<circle cx="567.53" cy="432.79" r="1.55" fill="#fff"/>
<circle cx="581.65" cy="443.05" r="1.55" fill="#fff"/>
<circle cx="588.02" cy="449.03" r="1.55" fill="#fff"/>
<circle cx="593.86" cy="455.52" r="1.55" fill="#fff"/>
<circle cx="599.15" cy="462.47" r="1.55" fill="#fff"/>
<ellipse cx="513.50" cy="627.00" rx="6.3" ry="2.3" fill="#fff" transform="rotate(90.00 513.50 627.00)"/>
<ellipse cx="470.79" cy="617.92" rx="6.3" ry="2.3" fill="#fff" transform="rotate(114.00 470.79 617.92)"/>
<ellipse cx="435.47" cy="592.26" rx="6.3" ry="2.3" fill="#fff" transform="rotate(138.00 435.47 592.26)"/>
<ellipse cx="413.64" cy="554.45" rx="6.3" ry="2.3" fill="#fff" transform="rotate(162.00 413.64 554.45)"/>
<ellipse cx="409.08" cy="511.02" rx="6.3" ry="2.3" fill="#fff" transform="rotate(186.00 409.08 511.02)"/>
<ellipse cx="422.57" cy="469.50" rx="6.3" ry="2.3" fill="#fff" transform="rotate(210.00 422.57 469.50)"/>
<ellipse cx="451.78" cy="437.05" rx="6.3" ry="2.3" fill="#fff" transform="rotate(234.00 451.78 437.05)"/>
<ellipse cx="491.67" cy="419.29" rx="6.3" ry="2.3" fill="#fff" transform="rotate(258.00 491.67 419.29)"/>
<ellipse cx="535.33" cy="419.29" rx="6.3" ry="2.3" fill="#fff" transform="rotate(282.00 535.33 419.29)"/>
<ellipse cx="575.22" cy="437.05" rx="6.3" ry="2.3" fill="#fff" transform="rotate(306.00 575.22 437.05)"/>
<ellipse cx="604.43" cy="469.50" rx="6.3" ry="2.3" fill="#fff" transform="rotate(330.00 604.43 469.50)"/>
<text x="512.50" y="609.60" font-family="Liberation Sans" font-weight="bold" font-style="italic" font-size="12.5" text-anchor="middle" dominant-baseline="central" fill="#fff">0</text>
<text x="477.00" y="601.20" font-family="Liberation Sans" font-weight="bold" font-style="italic" font-size="12.5" text-anchor="middle" dominant-baseline="central" fill="#fff">10</text>
<text x="449.20" y="578.20" font-family="Liberation Sans" font-weight="bold" font-style="italic" font-size="12.5" text-anchor="middle" dominant-baseline="central" fill="#fff">20</text>
<text x="431.40" y="547.80" font-family="Liberation Sans" font-weight="bold" font-style="italic" font-size="12.5" text-anchor="middle" dominant-baseline="central" fill="#fff">30</text>
<text x="427.50" y="512.20" font-family="Liberation Sans" font-weight="bold" font-style="italic" font-size="12.5" text-anchor="middle" dominant-baseline="central" fill="#fff">40</text>
<text x="438.80" y="479.20" font-family="Liberation Sans" font-weight="bold" font-style="italic" font-size="12.5" text-anchor="middle" dominant-baseline="central" fill="#fff">50</text>
<text x="462.10" y="450.80" font-family="Liberation Sans" font-weight="bold" font-style="italic" font-size="12.5" text-anchor="middle" dominant-baseline="central" fill="#fff">60</text>
<text x="495.40" y="434.60" font-family="Liberation Sans" font-weight="bold" font-style="italic" font-size="12.5" text-anchor="middle" dominant-baseline="central" fill="#fff">70</text>
<text x="531.60" y="434.60" font-family="Liberation Sans" font-weight="bold" font-style="italic" font-size="12.5" text-anchor="middle" dominant-baseline="central" fill="#fff">80</text>
<text x="564.30" y="450.80" font-family="Liberation Sans" font-weight="bold" font-style="italic" font-size="12.5" text-anchor="middle" dominant-baseline="central" fill="#fff">90</text>
<text x="585.00" y="479.20" font-family="Liberation Sans" font-weight="bold" font-style="italic" font-size="12.5" text-anchor="middle" dominant-baseline="central" fill="#fff">100</text>
<text x="516.1" y="478.3" font-family="Liberation Sans" font-size="13.6" text-anchor="middle" fill="#fff">ThrottlePct</text>
<text x="513.2" y="580.1" font-family="Liberation Sans" font-size="13.6" text-anchor="middle" fill="#fff">%</text>
<circle cx="513.2" cy="521.7" r="17.6" fill="url(#hub)"/>
<rect x="535.5" y="502.5" width="107" height="61" fill="#000" stroke="#646464" stroke-width="1"/>
<g stroke="#fff" stroke-width="2.30" stroke-linecap="round" fill="none"><line x1="624.78" y1="522.45" x2="635.68" y2="522.45"/><line x1="636.34" y1="523.15" x2="635.73" y2="532.95"/><line x1="635.68" y1="533.65" x2="635.08" y2="543.45"/><line x1="623.43" y1="544.15" x2="634.33" y2="544.15"/><line x1="623.38" y1="533.65" x2="622.78" y2="543.45"/><line x1="624.04" y1="523.15" x2="623.43" y2="532.95"/></g><circle cx="613.25" cy="543.25" r="2.07" fill="#fff"/><g stroke="#fff" stroke-width="2.30" stroke-linecap="round" fill="none"><line x1="597.88" y1="522.45" x2="608.78" y2="522.45"/><line x1="609.44" y1="523.15" x2="608.83" y2="532.95"/><line x1="608.78" y1="533.65" x2="608.18" y2="543.45"/><line x1="596.53" y1="544.15" x2="607.43" y2="544.15"/><line x1="597.14" y1="523.15" x2="596.53" y2="532.95"/><line x1="597.21" y1="533.30" x2="608.11" y2="533.30"/></g>
<polygon points="524.97,483.52 473.18,621.66 474.67,622.25 531.48,486.10" fill="#d40000"/>
<circle cx="850.5" cy="522" r="143" fill="#000" stroke="#ababab" stroke-width="4.4"/>
<circle cx="850.5" cy="522" r="139" fill="none" stroke="#8d8d8d" stroke-width="4"/>

<circle cx="842.11" cy="625.96" r="1.55" fill="#fff"/>
<circle cx="833.77" cy="624.95" r="1.55" fill="#fff"/>
<circle cx="825.54" cy="623.27" r="1.55" fill="#fff"/>
<circle cx="809.62" cy="617.95" r="1.55" fill="#fff"/>
<circle cx="802.03" cy="614.35" r="1.55" fill="#fff"/>
<circle cx="794.76" cy="610.15" r="1.55" fill="#fff"/>
<circle cx="781.34" cy="600.07" r="1.55" fill="#fff"/>
<circle cx="775.28" cy="594.25" r="1.55" fill="#fff"/>
<circle cx="769.71" cy="587.96" r="1.55" fill="#fff"/>
<circle cx="760.17" cy="574.15" r="1.55" fill="#fff"/>
<circle cx="756.27" cy="566.71" r="1.55" fill="#fff"/>
<circle cx="752.98" cy="558.99" r="1.55" fill="#fff"/>
<circle cx="748.31" cy="542.86" r="1.55" fill="#fff"/>
<circle cx="746.96" cy="534.57" r="1.55" fill="#fff"/>
<circle cx="746.28" cy="526.20" r="1.55" fill="#fff"/>
<circle cx="746.96" cy="509.43" r="1.55" fill="#fff"/>
<circle cx="748.31" cy="501.14" r="1.55" fill="#fff"/>
<circle cx="750.32" cy="492.98" r="1.55" fill="#fff"/>
<circle cx="756.27" cy="477.29" r="1.55" fill="#fff"/>
<circle cx="760.17" cy="469.85" r="1.55" fill="#fff"/>
<circle cx="764.66" cy="462.75" r="1.55" fill="#fff"/>
<circle cx="775.28" cy="449.75" r="1.55" fill="#fff"/>
<circle cx="781.34" cy="443.93" r="1.55" fill="#fff"/>
<circle cx="787.84" cy="438.62" r="1.55" fill="#fff"/>
<circle cx="802.03" cy="429.65" r="1.55" fill="#fff"/>
<circle cx="809.62" cy="426.05" r="1.55" fill="#fff"/>
<circle cx="817.47" cy="423.07" r="1.55" fill="#fff"/>
<circle cx="833.77" cy="419.05" r="1.55" fill="#fff"/>
<circle cx="842.11" cy="418.04" r="1.55" fill="#fff"/>
<circle cx="850.50" cy="417.70" r="1.55" fill="#fff"/>
<circle cx="867.23" cy="419.05" r="1.55" fill="#fff"/>
<circle cx="875.46" cy="420.73" r="1.55" fill="#fff"/>
<circle cx="883.53" cy="423.07" r="1.55" fill="#fff"/>
<circle cx="898.97" cy="429.65" r="1.55" fill="#fff"/>
<circle cx="906.24" cy="433.85" r="1.55" fill="#fff"/>
<circle cx="913.16" cy="438.62" r="1.55" fill="#fff"/>
<circle cx="925.72" cy="449.75" r="1.55" fill="#fff"/>
<circle cx="931.29" cy="456.04" r="1.55" fill="#fff"/>
<circle cx="936.34" cy="462.75" r="1.55" fill="#fff"/>
<ellipse cx="850.50" cy="627.00" rx="6.3" ry="2.3" fill="#fff" transform="rotate(90.00 850.50 627.00)"/>
<ellipse cx="817.25" cy="621.60" rx="6.3" ry="2.3" fill="#fff" transform="rotate(108.46 817.25 621.60)"/>
<ellipse cx="787.42" cy="605.94" rx="6.3" ry="2.3" fill="#fff" transform="rotate(126.92 787.42 605.94)"/>
<ellipse cx="764.09" cy="581.65" rx="6.3" ry="2.3" fill="#fff" transform="rotate(145.38 764.09 581.65)"/>
<ellipse cx="749.65" cy="551.21" rx="6.3" ry="2.3" fill="#fff" transform="rotate(163.85 749.65 551.21)"/>
<ellipse cx="745.59" cy="517.77" rx="6.3" ry="2.3" fill="#fff" transform="rotate(182.31 745.59 517.77)"/>
<ellipse cx="752.32" cy="484.77" rx="6.3" ry="2.3" fill="#fff" transform="rotate(200.77 752.32 484.77)"/>
<ellipse cx="769.17" cy="455.59" rx="6.3" ry="2.3" fill="#fff" transform="rotate(219.23 769.17 455.59)"/>
<ellipse cx="794.38" cy="433.26" rx="6.3" ry="2.3" fill="#fff" transform="rotate(237.69 794.38 433.26)"/>
<ellipse cx="825.37" cy="420.05" rx="6.3" ry="2.3" fill="#fff" transform="rotate(256.15 825.37 420.05)"/>
<ellipse cx="858.95" cy="417.34" rx="6.3" ry="2.3" fill="#fff" transform="rotate(274.62 858.95 417.34)"/>
<ellipse cx="891.66" cy="425.40" rx="6.3" ry="2.3" fill="#fff" transform="rotate(293.08 891.66 425.40)"/>
<ellipse cx="920.13" cy="443.41" rx="6.3" ry="2.3" fill="#fff" transform="rotate(311.54 920.13 443.41)"/>
<ellipse cx="941.43" cy="469.50" rx="6.3" ry="2.3" fill="#fff" transform="rotate(330.00 941.43 469.50)"/>
<text x="849.50" y="609.60" font-family="Liberation Sans" font-weight="bold" font-style="italic" font-size="12.5" text-anchor="middle" dominant-baseline="central" fill="#fff">0</text>
<text x="822.70" y="604.40" font-family="Liberation Sans" font-weight="bold" font-style="italic" font-size="12.5" text-anchor="middle" dominant-baseline="central" fill="#fff">20</text>
<text x="798.40" y="590.20" font-family="Liberation Sans" font-weight="bold" font-style="italic" font-size="12.5" text-anchor="middle" dominant-baseline="central" fill="#fff">40</text>
<text x="780.00" y="568.20" font-family="Liberation Sans" font-weight="bold" font-style="italic" font-size="12.5" text-anchor="middle" dominant-baseline="central" fill="#fff">60</text>
<text x="767.10" y="544.60" font-family="Liberation Sans" font-weight="bold" font-style="italic" font-size="12.5" text-anchor="middle" dominant-baseline="central" fill="#fff">80</text>
<text x="768.40" y="517.10" font-family="Liberation Sans" font-weight="bold" font-style="italic" font-size="12.5" text-anchor="middle" dominant-baseline="central" fill="#fff">100</text>
<text x="774.20" y="492.20" font-family="Liberation Sans" font-weight="bold" font-style="italic" font-size="12.5" text-anchor="middle" dominant-baseline="central" fill="#fff">120</text>
<text x="784.90" y="467.90" font-family="Liberation Sans" font-weight="bold" font-style="italic" font-size="12.5" text-anchor="middle" dominant-baseline="central" fill="#fff">140</text>
<text x="804.30" y="446.90" font-family="Liberation Sans" font-weight="bold" font-style="italic" font-size="12.5" text-anchor="middle" dominant-baseline="central" fill="#fff">160</text>
<text x="829.20" y="434.60" font-family="Liberation Sans" font-weight="bold" font-style="italic" font-size="12.5" text-anchor="middle" dominant-baseline="central" fill="#fff">180</text>
<text x="857.60" y="432.30" font-family="Liberation Sans" font-weight="bold" font-style="italic" font-size="12.5" text-anchor="middle" dominant-baseline="central" fill="#fff">200</text>
<text x="884.80" y="439.50" font-family="Liberation Sans" font-weight="bold" font-style="italic" font-size="12.5" text-anchor="middle" dominant-baseline="central" fill="#fff">220</text>
<text x="907.80" y="456.90" font-family="Liberation Sans" font-weight="bold" font-style="italic" font-size="12.5" text-anchor="middle" dominant-baseline="central" fill="#fff">240</text>
<text x="922.00" y="479.20" font-family="Liberation Sans" font-weight="bold" font-style="italic" font-size="12.5" text-anchor="middle" dominant-baseline="central" fill="#fff">260</text>
<text x="853" y="478.3" font-family="Liberation Sans" font-size="13.6" text-anchor="middle" fill="#fff">VehicleSpeed</text>
<text x="850.2" y="580.1" font-family="Liberation Sans" font-size="13.6" text-anchor="middle" fill="#fff">km/h</text>
<circle cx="850.2" cy="521.7" r="17.6" fill="url(#hub)"/>
<rect x="872.5" y="502.5" width="107" height="61" fill="#000" stroke="#646464" stroke-width="1"/>
<g stroke="#fff" stroke-width="2.30" stroke-linecap="round" fill="none"><line x1="961.98" y1="522.45" x2="972.88" y2="522.45"/><line x1="973.54" y1="523.15" x2="972.93" y2="532.95"/><line x1="972.88" y1="533.65" x2="972.28" y2="543.45"/><line x1="960.63" y1="544.15" x2="971.53" y2="544.15"/><line x1="960.58" y1="533.65" x2="959.98" y2="543.45"/><line x1="961.24" y1="523.15" x2="960.63" y2="532.95"/></g>
<polygon points="847.00,482.00 849.70,629.50 851.30,629.50 854.00,482.00" fill="#d40000"/>
</svg>
<div id="lcd" class="abs"></div>
<svg class="abs" style="left:0;top:0;will-change:transform" width="1024" height="742" viewBox="0 0 1024 742"><g stroke="#2c2c2c" stroke-width="1.70" stroke-linecap="round" fill="none"><line x1="126.00" y1="681.05" x2="134.30" y2="681.05"/><line x1="134.95" y1="681.75" x2="134.56" y2="688.15"/><line x1="134.51" y1="688.85" x2="134.12" y2="695.25"/><line x1="125.07" y1="695.95" x2="133.37" y2="695.95"/><line x1="124.81" y1="688.85" x2="124.42" y2="695.25"/><line x1="125.25" y1="681.75" x2="124.86" y2="688.15"/></g><g stroke="#2c2c2c" stroke-width="1.70" stroke-linecap="round" fill="none"><line x1="104.50" y1="681.05" x2="112.80" y2="681.05"/><line x1="113.45" y1="681.75" x2="113.06" y2="688.15"/><line x1="113.01" y1="688.85" x2="112.62" y2="695.25"/><line x1="103.57" y1="695.95" x2="111.87" y2="695.95"/><line x1="103.31" y1="688.85" x2="102.92" y2="695.25"/><line x1="103.75" y1="681.75" x2="103.36" y2="688.15"/></g><circle cx="94.35" cy="695.05" r="1.53" fill="#2c2c2c"/><g stroke="#2c2c2c" stroke-width="1.70" stroke-linecap="round" fill="none"><line x1="83.00" y1="681.05" x2="91.30" y2="681.05"/><line x1="91.95" y1="681.75" x2="91.56" y2="688.15"/><line x1="91.51" y1="688.85" x2="91.12" y2="695.25"/><line x1="82.07" y1="695.95" x2="90.37" y2="695.95"/><line x1="81.81" y1="688.85" x2="81.42" y2="695.25"/><line x1="82.25" y1="681.75" x2="81.86" y2="688.15"/></g>
<text x="147.6" y="695.4" font-family="Liberation Sans" font-size="19" fill="#2c2c2c">L/h</text></svg>
<div class="btn" style="left:816px;width:96px;color:#aca899;padding-left:3px">Configuration</div>
<div class="btn" style="left:917px;width:94px;color:#000;">Stop Live</div>
<div id="status" class="abs"><div class="abs" style="left:0;top:-1px;width:1024px;height:2px;background:#fff"></div><div class="abs" style="left:0;top:1px;width:1024px;height:1px;background:#a5a290"></div>
<span class="abs" style="left:3px;top:9px;white-space:nowrap">Click Stop Live to change gauge configuration.</span>
<div class="sp" style="left:709px;width:149px;">Logging:  Off</div>
<div class="sp" style="left:860px;width:148px;">Interface:  Connected</div>
</div>
<div class="abs" style="left:0;top:738px;width:1024px;height:4px;background:linear-gradient(#4a90ec,#2f7be4 2px)"></div>
<div class="abs" style="left:0;top:738px;width:93px;height:4px;background:linear-gradient(#4f9a52,#6fb070)"></div>
<div class="abs" style="left:639px;top:0;width:384px;height:230px;background:#fefefe;overflow:hidden"><svg width="382" height="230" viewBox="639 0 382 230" style="position:absolute;left:0;top:0">
<defs><filter id="pb" x="-5%" y="-5%" width="110%" height="110%"><feGaussianBlur stdDeviation="0.55"/></filter></defs>
<rect x="639" y="0" width="382" height="230" fill="#fefefe"/>
<g filter="url(#pb)">
<path d="M690 160 C705 168 735 166 750 152" fill="none" stroke="#4a4f4e" stroke-width="2.5" opacity="0.7"/>
<ellipse cx="711.5" cy="100" rx="57.5" ry="61" fill="none" stroke="#8d9694" stroke-width="5" transform="rotate(0 711.5 100)"/><ellipse cx="711.5" cy="100" rx="57.5" ry="61" fill="none" stroke="#c0c6c3" stroke-width="3.2" transform="rotate(0 711.5 100)"/>
<ellipse cx="711.3" cy="99" rx="53.5" ry="56.5" fill="none" stroke="#8d9694" stroke-width="5" transform="rotate(0 711.3 99)"/><ellipse cx="711.3" cy="99" rx="53.5" ry="56.5" fill="none" stroke="#c0c6c3" stroke-width="3.2" transform="rotate(0 711.3 99)"/>
<ellipse cx="711" cy="98" rx="49.5" ry="51.5" fill="none" stroke="#8d9694" stroke-width="5" transform="rotate(0 711 98)"/><ellipse cx="711" cy="98" rx="49.5" ry="51.5" fill="none" stroke="#c0c6c3" stroke-width="3.2" transform="rotate(0 711 98)"/>
<path d="M655.5 112 C657 130 661 138 666 148" fill="none" stroke="#8d9694" stroke-width="5.4" stroke-linecap="round"/><path d="M655.5 112 C657 130 661 138 666 148" fill="none" stroke="#c0c6c3" stroke-width="3.4" stroke-linecap="round"/>
<path d="M661 118 C662 132 666 140 669.5 148" fill="none" stroke="#8d9694" stroke-width="5.4" stroke-linecap="round"/><path d="M661 118 C662 132 666 140 669.5 148" fill="none" stroke="#c0c6c3" stroke-width="3.4" stroke-linecap="round"/>
<path d="M768 118 C767 130 763 140 760 147" fill="none" stroke="#8d9694" stroke-width="5.4" stroke-linecap="round"/><path d="M768 118 C767 130 763 140 760 147" fill="none" stroke="#c0c6c3" stroke-width="3.4" stroke-linecap="round"/>
<path d="M654.5 153.5 L658.5 152.5 L665 169 L661 170.5 Z" fill="#b6bcb9" stroke="#848e8c" stroke-width="0.7"/>
<path d="M662.5 146.5 L673.5 144.5 L676.5 152 L665 154.5 Z" fill="#b2b8b5" stroke="#848e8c" stroke-width="0.7"/>
<path d="M660 155.5 L676 151.5 L690 163 L697 170 L693.5 178.5 L672 187.5 L667 180 Z" fill="#bbc1be" stroke="#838d8b" stroke-width="0.9"/>
<path d="M668 157 L676 172 L680 180" fill="none" stroke="#98a2a0" stroke-width="1"/>
<path d="M679 180.5 L690.5 176 L693 181 L681.5 186.5 Z" fill="#53667c" stroke="#c5cbd0" stroke-width="1.3"/>
<circle cx="674.3" cy="186" r="2.3" fill="#b79b72"/><circle cx="695.6" cy="173.2" r="2.3" fill="#b79b72"/>
<path d="M768 149 L772 150 L770.5 169 L766.5 168.5 Z" fill="#b6bcb9" stroke="#848e8c" stroke-width="0.7"/>
<path d="M754.5 145 L764 146.5 L763 155 L753 153.5 Z" fill="#b2b8b5" stroke="#848e8c" stroke-width="0.7"/>
<path d="M747 154.5 L765.5 157 L768 170 L763 187 L735 179 L738 170 Z" fill="#bbc1be" stroke="#838d8b" stroke-width="0.9"/>
<path d="M757 157 L753 172 L750 182" fill="none" stroke="#98a2a0" stroke-width="1"/>
<path d="M742 180.5 L756.5 184 L755.5 189.5 L741 186 Z" fill="#53667c" stroke="#c5cbd0" stroke-width="1.3"/>
<circle cx="736.5" cy="180.5" r="2.3" fill="#b79b72"/><circle cx="761" cy="187" r="2.3" fill="#b79b72"/>
<ellipse cx="803" cy="49" rx="10" ry="8.8" fill="#8b908d"/><ellipse cx="803" cy="49" rx="6.5" ry="5.5" fill="#6d726f"/>
<ellipse cx="807" cy="166.5" rx="9.5" ry="9.5" fill="#8f9492"/><ellipse cx="807" cy="166.5" rx="6" ry="6" fill="#6f7673"/>
<g transform="translate(-2 0)">
<path d="M790 66 L797 66 L797 63.5 L812 63.5 L812 66 L819 66 L819 72 L823.5 74 L823.5 128 L819 131 L791 131 L787 128 L787 74 L790 72 Z" fill="#15191b"/>
<rect x="788.5" y="90" width="33" height="18.5" rx="1.5" fill="#e6ebe8"/>
<rect x="794.5" y="95" width="22" height="5.5" fill="#3c4648"/>
<rect x="796" y="102.5" width="19" height="1.6" fill="#aab2b0"/>
<rect x="791" y="130" width="29" height="11" rx="1.5" fill="#2a2f31"/>
<rect x="797" y="133" width="17" height="6.5" rx="1.5" fill="#8d979b"/>
<circle cx="793.5" cy="136" r="2" fill="#a08a60"/><circle cx="817.5" cy="136" r="2" fill="#a08a60"/>
</g>
<ellipse cx="914" cy="106" rx="80" ry="76" fill="none" stroke="#14191a" stroke-width="4.3" transform="rotate(-8 914 106)"/>
<ellipse cx="917" cy="112" rx="77" ry="68" fill="none" stroke="#14191a" stroke-width="4.3" transform="rotate(-10 917 112)"/>
<path d="M986.5 50 C990 72 999 100 996 130 C993 155 978 165 968 176" fill="none" stroke="#14191a" stroke-width="5" stroke-linecap="round"/>
<path d="M980 160 L966 176" fill="none" stroke="#14191a" stroke-width="5" stroke-linecap="round"/>
<path d="M972 13.5 L979.5 13.5 L980 9.5 L994 9.5 L994.5 13.5 L1001 13.5 L1001 47.5 L993 47.5 L993 33 L978.5 33 L978.5 47 L972 47 Z" fill="#14191a"/>
<rect x="980.3" y="30" width="11.2" height="21.5" rx="1.5" fill="#14191a"/>
<path d="M931 199 L959 175 L966 170 L972 177 L967 183 L982.5 200 L956 225.5 Z" fill="#192022"/>
<path d="M934 198.5 L959.5 177.5 L964 182 L938 203.5 Z" fill="#27353a"/>
<path d="M962 201 L969 195.5 L974 201 L967 207 Z" fill="#2b383c"/>
</g>
</svg></div>
<div class="abs" style="left:1022px;top:26px;width:2px;height:712px;background:#f8f7f2"></div><div class="abs" style="left:1023px;top:0;width:1px;height:26px;background:#10309c"></div>
</div></body></html>
